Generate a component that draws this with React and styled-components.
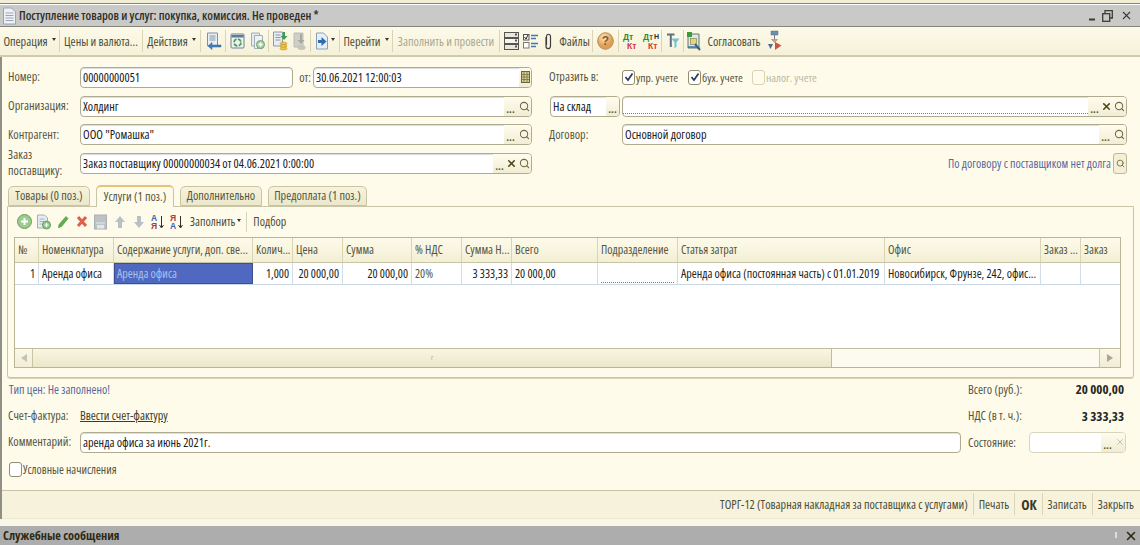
import React from "react";
import styled, { createGlobalStyle } from "styled-components";
import { Search, X } from "lucide-react";

const Global = createGlobalStyle`
  html, body { margin: 0; padding: 0; background: #fefbeb; }
  * { box-sizing: border-box; }
  body { font: 12.2px "Open Sans", "Liberation Sans", sans-serif; font-stretch: 75%; color: #4a4a38; }
`;

const Page = styled.div`
  width: 1140px; height: 545px; overflow: hidden; display: flex; flex-direction: column;
  background: #fefbeb; position: relative;
`;
const TopStrip = styled.div`
  height: 5px; flex: none; background: linear-gradient(#f1eed6 0 3px, #85856f 3px 4px, #fff 4px);
`;
const Window = styled.div`
  flex: none; height: 521px; display: flex; flex-direction: column; border-left: 2px solid #8f8f84;
`;
const TitleBar = styled.div`
  flex: none; height: 22px; background: #c9c9c7; border-bottom: 1px solid #85857a;
  display: flex; align-items: center; padding: 0 7px 0 2px; margin-left: -2px;
`;
const TitleText = styled.div`
  margin-left: 2px; font-size: 12.2px; font-weight: 600; color: #2e2e26; flex: 1; white-space: nowrap;
`;
const WinControls = styled.div`
  display: flex; align-items: center; gap: 7px; color: #3c3c34;
`;
const Toolbar = styled.div`
  flex: none; height: 30px; display: flex; align-items: center; margin-left: -2px;
  background: linear-gradient(#fdfaea, #f5f1d8); border-bottom: 2px solid #cfcbac;
`;
const Sep = styled.div`
  flex: none; width: 1px; height: ${p => p.$h || 22}px; background: #d8d4b4;
`;
const ToolBtn = styled.div`
  flex: none; width: ${p => p.$w}px; display: flex; align-items: center; justify-content: center; gap: 2px;
  white-space: nowrap; font-size: 12.2px; color: ${p => p.$off ? "#a9a894" : "#4c4c38"};
`;
const Caret = styled.span`
  width: 0; height: 0; border-left: 2.5px solid transparent; border-right: 2.5px solid transparent;
  border-top: 3px solid #38382c; margin-top: -3px; margin-left: 2px;
`;

const Form = styled.div`
  flex: none; display: grid; grid-template-columns: 72px 452px 90px 505px;
  grid-auto-rows: 28.7px; padding: 6px 0 0 6px; align-items: center;
`;
const LeftField = styled.div` display: flex; align-items: center; grid-column: 2; `;
const Label = styled.div`
  font-size: 12.2px; color: #55553f; line-height: 16px; white-space: nowrap;
`;
const RightCell = styled.div`
  grid-column: ${p => p.$col || 4}; display: flex; align-items: center;
  justify-content: ${p => p.$end ? "flex-end" : "flex-start"}; margin-left: ${p => p.$ml || 0}px;
`;
const Field = styled.div`
  height: 21px; display: flex; align-items: stretch; background: #fff; border: 1px solid #aeab8e; border-radius: 4px;
  box-shadow: inset 0 1px 1px #ddd; overflow: hidden; position: relative;
  ${p => p.$w ? `width: ${p.$w}px; flex: none;` : "flex: 1;"}
  ${p => p.$dim && "border-color: #d8d5bc; box-shadow: none;"}
`;
const Value = styled.div`
  flex: 1; padding-left: 2px; font-size: 12.2px; color: #202018; line-height: 19px; white-space: nowrap;
  ${p => p.$req && "margin: 0 0 2px 0; border-bottom: 1px dotted #d0566a;"}
`;
const FBtn = styled.div`
  flex: none; width: ${p => p.$w || 11}px; display: flex; align-items: center; justify-content: center;
  background: linear-gradient(#fefcee, #f1edd4); color: ${p => p.$dim ? "#b5b5a0" : "#5e5a32"};
  font-weight: 700; font-size: 11px;
`;
const Dots = styled(FBtn)` align-items: flex-end; line-height: 14px; width: 13px; `;
const Ot = styled.span` margin: 0 2px 0 6px; font-size: 12.2px; color: #55553f; `;
const Check = styled.div`
  width: 13px; height: 15px; border: 1px solid ${p => p.$off ? "#d6d3ba" : "#8f8d72"}; border-radius: 3px; background: ${p => p.$off ? "transparent" : "#fff"};
  display: flex; align-items: center; justify-content: center; flex: none; margin-right: 1px;
`;
const CheckLabel = styled.label`
  display: flex; align-items: center; font-size: 11.6px; color: ${p => p.$off ? "#b9b8a2" : "#55553f"};
  width: ${p => p.$w}px; flex: none; white-space: nowrap;
`;
const Blue = styled.span` color: #5768a0; font-size: 12px; white-space: nowrap; `;
const SmallBtn = styled.div`
  width: 14px; height: 21px; margin-left: 2px; border: 1px solid #bdb994; border-radius: 3px; background: #f4efd6;
  display: flex; align-items: center; justify-content: center; color: #5e5a32;
`;

const Tabs = styled.div`
  flex: none; display: flex; align-items: flex-end; gap: 6px; height: 22px; margin-top: 6px; padding-left: 6px;
`;
const Tab = styled.div`
  width: ${p => p.$w}px; height: ${p => p.$on ? 22 : 20}px; display: flex; align-items: center; justify-content: center;
  font-size: 12.2px; color: #55553f; white-space: nowrap; border: 1px solid #c9c5a4; border-radius: 5px 5px 0 0;
  background: ${p => p.$on ? "#fefbeb" : "linear-gradient(#f7f3dc,#ece8cc)"};
  ${p => p.$on && "border-top: 2px solid #e3c478; border-bottom: 0; margin-bottom: -1px; position: relative; z-index: 1;"}
`;
const Panel = styled.div`
  flex: none; height: 172px; margin: 0 6px 0 5px; border: 1px solid #c9c5a4; border-radius: 0 0 3px 3px; box-shadow: 0 1px 0 #d8d4b4;
  padding: 0 12px 0 6px; display: flex; flex-direction: column;
`;
const SubBar = styled.div`
  flex: none; height: 30px; display: flex; align-items: center; padding-left: 1px;
`;
const Slot = styled.div`
  flex: none; width: ${p => p.$w || 19}px; display: flex; align-items: center; justify-content: center;
`;
const SubText = styled.div`
  font-size: 12px; color: #4c4c38; display: flex; align-items: center; white-space: nowrap; padding: 0 ${p => p.$pr || 4}px 0 ${p => p.$pl || 4}px;
`;

const TableFrame = styled.div`
  flex: none; width: 1107px; height: 131px; border: 1px solid #b8b598; display: flex; flex-direction: column; background: #fff;
`;
const columns = "24px 75px 139px 40px 50px 69px 50px 50px 86px 80px 207px 156px 40px 1fr";
const HeadRow = styled.div`
  flex: none; height: 25px; display: grid; grid-template-columns: ${columns};
  background: linear-gradient(#fdfaea, #f3efd5); border-bottom: 1px solid #c9c5a4;
`;
const HeadCell = styled.div`
  padding: 0 3px; line-height: 23px; font-size: 12px; color: #55553f; white-space: nowrap; overflow: hidden;
  border-right: 1px solid #d8d4b4; &:last-child { border-right: 0; }
`;
const DataRow = styled.div`
  flex: none; height: 22px; display: grid; grid-template-columns: ${columns}; border-bottom: 1px solid #c8d6e6;
`;
const Cell = styled.div`
  padding: 0 3px; line-height: 21px; font-size: 12px; color: #222218; white-space: nowrap; overflow: hidden;
  text-align: ${p => p.$right ? "right" : "left"}; border-right: 1px solid #d3dde9;
  &:last-child { border-right: 0; }
  ${p => p.$sel && "background: #4f68c0; color: #a9c1ee; border: 1px solid #3d4e90; line-height: 19px; padding-left: 2px;"}
  ${p => p.$muted && "color: #55553f;"}
`;
const ReqCell = styled.div`
  border-right: 1px solid #d3dde9; padding: 0 3px;
  &::after { content: ""; display: block; height: 19px; border-bottom: 1px dotted #d0566a; }
`;
const Spacer = styled.div` flex: 1; `;
const Scroll = styled.div`
  flex: none; height: 19px; display: flex; border-top: 1px solid #c0bd9f; background: #fdfbf0;
`;
const ScrollBtn = styled.div`
  flex: none; width: ${p => p.$w}px; display: flex; align-items: center; justify-content: center;
  background: linear-gradient(#fbf8e8, #f1edd6); border-${p => p.$side}: 1px solid #c9c5a4;
`;
const Thumb = styled.div`
  flex: none; width: 799px; background: linear-gradient(#f9f6e2, #ebe7cb); border-right: 1px solid #c0bd9f;
  display: flex; align-items: center; justify-content: center; font-size: 7px; color: #b0ad90;
`;
const Track = styled.div` flex: 1; `;
const Arrow = styled.span`
  width: 0; height: 0; border-top: 4px solid transparent; border-bottom: 4px solid transparent;
  ${p => p.$left ? "border-right: 6px solid #c4c4b4;" : "border-left: 6px solid #a8a898;"}
`;

const Bottom = styled.div`
  flex: none; display: grid; grid-template-columns: 72px 881px 68px 97px; grid-auto-rows: 26.7px;
  padding: 0 0 0 6px; align-items: center; height: 114px; margin-top: -2px;
`;
const SpanLabel = styled.div` grid-column: 1 / span 2; padding-left: 1px; `;
const RightLabel = styled.div`
  grid-column: 3; margin-left: 7px; font-size: 12.2px; color: #55553f; white-space: nowrap;
`;
const Total = styled.div`
  grid-column: 4; text-align: right; padding-right: 2px; font-weight: 700; font-size: 13px; color: #26261c; white-space: nowrap;
`;
const DocLink = styled.a`
  font-size: 12.2px; color: #3c3c28; text-decoration: underline;
`;
const CommentWrap = styled.div` grid-column: 2; display: flex; `;
const FooterBar = styled.div`
  flex: none; height: 29px; display: flex; align-items: center; justify-content: flex-end; padding-right: 1px;
  background: #f6f2dc; border-top: 1px solid #c5c2a6; border-bottom: 1px solid #efebd3;
`;
const FootBtn = styled.div`
  font-size: 12.2px; padding: 0 ${p => p.$pr ?? 5}px 0 ${p => p.$pl ?? 5}px; color: #4c4c38; white-space: nowrap;
  ${p => p.$bold && "font-weight: 700; font-size: 14px; color: #38382a;"}
`;
const Gap = styled.div` flex: none; height: 8px; background: #faf7e6; margin-left: -2px; `;
const Messages = styled.div`
  flex: 1; background: #adadad; display: flex; align-items: center; justify-content: space-between; padding: 0 2px 0 3px;
  font-size: 12.3px; font-weight: 700; color: #2e2a14; height: 19px;
`;
const MsgControls = styled.div` display: flex; align-items: center; gap: 5px; color: #2e2a14; `;
const CheckboxRow = styled.div`
  grid-column: 1 / span 2; display: flex; align-items: center; padding-left: 1px; font-size: 11.8px; color: #55553f;
`;

/* ---------- drawings ---------- */
const Svg = ({ w = 16, h = 16, children }) => <svg width={w} height={h} viewBox={`0 0 ${w} ${h}`}>{children}</svg>;

const DocIcon = () => <Svg w={15} h={18}>
  <path d="M1.500 1h8l4 4v12h-12z" fill="#eef2f7" stroke="#9aa6b4" />
  <path d="M3.500 6h8M3.500 8.500h8M3.500 11h8M3.500 13.500h8" stroke="#9aa6b4" />
</Svg>;
const ReturnDoc = () => <Svg w={17} h={19}>
  <path d="M2.500 1h10v13h-10z" fill="#e9eef3" stroke="#7b91a8" />
  <path d="M4.500 4h6M4.500 6h6M4.500 8h6" stroke="#7e98b2" />
  <path d="M16 13H7v-2.500L3 14l4 3.500V15h9z" fill="#3f7fbe" stroke="#2f6298" strokeWidth=".5" />
</Svg>;
const RecycleIcon = () => <Svg w={15} h={16}>
  <rect x="1" y="1" width="13" height="14" rx="1" fill="#eef2f2" stroke="#6d8295" />
  <path d="M1.500 2h12v2.500h-12z" fill="#5d7c9a" />
  <circle cx="7.500" cy="9.500" r="3.500" fill="none" stroke="#4b9a52" strokeWidth="1.800" strokeDasharray="4 1.500" />
</Svg>;
const CopyAdd = () => <Svg w={16} h={19}>
  <path d="M1.500 1h8v13h-8z" fill="#e6ebef" stroke="#a3adb7" />
  <path d="M4.500 3.500h8v13h-8z" fill="#eef2f4" stroke="#a3adb7" />
  <circle cx="10.500" cy="12.500" r="4" fill="#a9d2a5" stroke="#6ca36a" />
  <path d="M10.500 10.500v4M8.500 12.500h4" stroke="#fff" strokeWidth="1.300" />
</Svg>;
const CoinDoc = () => <Svg w={16} h={20}>
  <path d="M1.500 1h9v14h-9z" fill="#e8edf1" stroke="#8a99a8" />
  <path d="M3.500 4h5M3.500 6.500h5M3.500 9h5" stroke="#8a99a8" />
  <path d="M11 1v4H8.500l3.500 4 3.500-4H13V1z" fill="#3e9d4b" />
  <ellipse cx="11.500" cy="12.500" rx="3.500" ry="1.500" fill="#eec54a" stroke="#b58b20" strokeWidth=".5" />
  <ellipse cx="11.500" cy="15" rx="3.500" ry="1.500" fill="#eec54a" stroke="#b58b20" strokeWidth=".5" />
  <ellipse cx="11.500" cy="17.500" rx="3.500" ry="1.500" fill="#eec54a" stroke="#b58b20" strokeWidth=".5" />
</Svg>;
const GrayDoc = () => <Svg w={14} h={19}>
  <path d="M1 1h9v14H1z" fill="#cfcfc8" stroke="#bcbcb2" />
  <path d="M7 2v6H4.500l3.500 4 3.500-4H9V2z" fill="#a8a8a0" />
  <ellipse cx="8.500" cy="15.500" rx="4" ry="2.500" fill="#c5c5bc" />
</Svg>;
const GoDoc = () => <Svg w={14} h={18}>
  <path d="M1.500 1h7l4 4v12h-11z" fill="#e8eef5" stroke="#8aa0b8" />
  <path d="M3 8h3.500V5l5 4.500-5 4.500v-3H3z" fill="#2f6cb0" />
</Svg>;
const Rows = () => <Svg w={15} h={18}>
  {[1, 7, 13].map(y => <g key={y}>
    <rect x=".5" y={y - .5} width="14" height="5" fill={y === 7 ? "#f6f6ee" : "#e8e8e0"} stroke="#56564e" />
    <rect x="11" y={y + .5} width="2" height="2" fill="#56564e" />
  </g>)}
</Svg>;
const Checks = () => <Svg w={15} h={16}>
  <rect x=".5" y="1.500" width="5.500" height="5.500" fill="#fff" stroke="#55554d" />
  <path d="M1.500 4l1.500 2 2-4" fill="none" stroke="#222" />
  <rect x=".5" y="9.500" width="5.500" height="5.500" fill="#fff" stroke="#7a7a72" />
  <path d="M8 2.500h7M8 5.500h5M8 10.500h7M8 13.500h5" stroke="#3d78b8" strokeWidth="1.500" />
</Svg>;
const Clip = () => <Svg w={8} h={17}>
  <path d="M2 4v9c0 3.500 4.500 3.500 4.500 0V3.500C6.500 .5 2.500 .5 2.500 3.500v8.500" fill="none" stroke="#3c3c3c" strokeWidth="1.200" />
</Svg>;
const Help = () => <Svg w={17} h={18}>
  <defs><radialGradient id="hg" cx=".4" cy=".3"><stop offset="0" stopColor="#fbe6c4" /><stop offset="1" stopColor="#dd9f55" /></radialGradient></defs>
  <ellipse cx="8.500" cy="9" rx="7.800" ry="8.300" fill="url(#hg)" stroke="#c08a4a" />
  <text x="8.500" y="13" fontSize="12" fontWeight="700" fill="#8a5a22" textAnchor="middle" fontFamily="Liberation Sans">?</text>
</Svg>;
const DtKt = ({ n }) => <Svg w={17} h={19}>
  <text x={n ? 1 : 2} y="8" fontSize="8.500" fontWeight="700" fill="#2c8a34" fontFamily="Liberation Sans">Дт</text>
  {n && <text x="12" y="7" fontSize="7" fontWeight="700" fill="#2a2a2a" fontFamily="Liberation Sans">Н</text>}
  <text x="6" y="17" fontSize="8.500" fontWeight="700" fill="#d8343c" fontFamily="Liberation Sans">Кт</text>
</Svg>;
const TFunnel = () => <Svg w={14} h={18}>
  <path d="M1 1.500h7.500v2H5.800V15H3.800V3.500H1z" fill="#607080" />
  <path d="M5.500 6.500h8l-3 4v4l-2 2v-6z" fill="#70c4dc" />
</Svg>;
const Approve = () => <Svg w={17} h={21}>
  <path d="M2 3h11v14H2z" fill="#dfe9dd" stroke="#5a7a6a" />
  <rect x="1" y="1" width="5" height="5" fill="#3c9c3c" />
  <rect x="4.500" y="7.500" width="6" height="6" fill="#e8d27c" stroke="#7a7a50" strokeWidth=".6" />
  <path d="M9 13l5 6" stroke="#2f5f90" strokeWidth="2" />
  <path d="M2 16h9" stroke="#3a70a8" strokeWidth="1.500" />
</Svg>;
const Route = () => <Svg w={15} h={22}>
  <path d="M4 1h7v4H4z" fill="#6f8fb2" stroke="#4f6c8e" strokeWidth=".5" />
  <path d="M7.500 5v4" stroke="#7a7a7a" />
  <path d="M4.500 9.500h6l-3 3z" fill="#c6a98a" stroke="#907050" strokeWidth=".5" />
  <path d="M1 14h5l-2.500 5z" fill="#4f6c8e" />
  <path d="M8 12l6.500 3.500L8 20z" fill="#d8503c" />
</Svg>;
const PlusGreen = () => <Svg w={15} h={15}>
  <circle cx="7.500" cy="7.500" r="7" fill="#9ccb90" stroke="#6c9c64" />
  <path d="M7.500 4v7M4 7.500h7" stroke="#fff" strokeWidth="2" />
</Svg>;
const DocPlus = () => <Svg w={15} h={16}>
  <path d="M1.500 1h7l3 3v10h-10z" fill="#e6edf2" stroke="#a3adb7" />
  <path d="M3.500 5h5M3.500 7.500h5M3.500 10h3" stroke="#a3b3c2" />
  <circle cx="10.500" cy="11" r="4" fill="#8fc688" stroke="#64a05c" />
  <path d="M10.500 9v4M8.500 11h4" stroke="#fff" strokeWidth="1.200" />
</Svg>;
const Pencil = () => <Svg w={12} h={14}>
  <path d="M9 1.500l2 2-6.500 8-3 1.200.6-3.200z" fill="#62b04a" stroke="#3f8a32" strokeWidth=".6" />
</Svg>;
const RedX = () => <Svg w={12} h={13}>
  <path d="M2 2l8 9M10 2l-8 9" stroke="#e0604c" strokeWidth="3" />
</Svg>;
const SaveGray = () => <Svg w={13} h={16}>
  <rect x=".5" y="1" width="12" height="14" fill="#bcc2c6" stroke="#aab0b4" />
  <path d="M2 9h9" stroke="#e6e8ea" />
  <rect x="3" y="11" width="7" height="3.500" fill="#e4e6e8" />
</Svg>;
const ArrowGray = ({ down }) => <Svg w={12} h={14}>
  <path d={down ? "M4 1h4v6h3l-5 6-5-6h3z" : "M4 13h4V7h3L6 1 1 7h3z"} fill="#b7c0c4" />
</Svg>;
const Sort = ({ rev }) => <Svg w={13} h={17}>
  <text x="0" y="7.500" fontSize="8.500" fontWeight="700" fill={rev ? "#a83c3c" : "#3c62a8"} fontFamily="Liberation Sans">{rev ? "Я" : "А"}</text>
  <text x="0" y="16" fontSize="8.500" fontWeight="700" fill={rev ? "#3c62a8" : "#a83c3c"} fontFamily="Liberation Sans">{rev ? "А" : "Я"}</text>
  <path d="M10.500 3v11M8.500 12l2 3 2-3" fill="none" stroke="#30302c" />
</Svg>;
const Tick = () => <Svg w={10} h={10}>
  <path d="M1.500 5l2.500 3 4.500-6.500" fill="none" stroke="#2a3a5a" strokeWidth="1.700" />
</Svg>;
const Restore = () => <Svg w={11} h={12}>
  <path d="M3 3V.7h7.300v7.300H8" fill="none" stroke="#3c3c34" strokeWidth="1.300" />
  <rect x=".7" y="3.700" width="7" height="7.600" fill="none" stroke="#3c3c34" strokeWidth="1.300" />
</Svg>;

const Magnifier = ({ s = 11 }) => <Search size={s} strokeWidth={2.2} color="#6a6640" />;
const DotsBtn = () => <Dots>...</Dots>;
const ClearBtn = () => <FBtn><X size={11} strokeWidth={3.400} color="#4e4416" /></FBtn>;
const SearchBtn = () => <FBtn $w={14}><Magnifier /></FBtn>;

const head = ["№", "Номенклатура", "Содержание услуги, доп. све...", "Колич...", "Цена", "Сумма", "% НДС", "Сумма Н...", "Всего", "Подразделение", "Статья затрат", "Офис", "Заказ ...", "Заказ"];

export default function App() {
  return (
    <Page>
      <Global />
      <TopStrip />
      <Window>
        <TitleBar>
          <DocIcon />
          <TitleText>Поступление товаров и услуг: покупка, комиссия. Не проведен *</TitleText>
          <WinControls>
            <Svg w={6} h={10}><path d="M0 8.500h6" stroke="#3c3c34" strokeWidth="2" /></Svg>
            <Restore />
            <X size={13} strokeWidth={2} color="#3c3c34" />
          </WinControls>
        </TitleBar>
        <Toolbar>
          <ToolBtn $w={59}>Операция<Caret /></ToolBtn><Sep />
          <ToolBtn $w={82}>Цены и валюта...</ToolBtn><Sep />
          <ToolBtn $w={57}>Действия<Caret /></ToolBtn><Sep />
          <Slot $w={24}><ReturnDoc /></Slot><Sep />
          <Slot $w={22}><RecycleIcon /></Slot><Slot $w={20}><CopyAdd /></Slot><Sep />
          <Slot $w={21}><CoinDoc /></Slot><Slot $w={20}><GrayDoc /></Slot><Sep />
          <Slot $w={28}><GoDoc /><Caret /></Slot><Sep />
          <ToolBtn $w={52}>Перейти<Caret /></ToolBtn><Sep />
          <ToolBtn $w={106} $off>Заполнить и провести</ToolBtn><Sep />
          <Slot $w={22}><Rows /></Slot><Slot $w={17}><Checks /></Slot><Slot $w={18}><Clip /></Slot>
          <ToolBtn $w={35}>Файлы</ToolBtn><Sep />
          <Slot $w={25}><Help /></Slot><Sep />
          <Slot $w={20}><DtKt /></Slot><Slot $w={22}><DtKt n /></Slot><Sep />
          <Slot $w={21}><TFunnel /></Slot><Sep />
          <Slot $w={21}><Approve /></Slot>
          <ToolBtn $w={58}>Согласовать</ToolBtn>
          <Slot $w={22}><Route /></Slot>
        </Toolbar>

        <Form>
          <Label>Номер:</Label>
          <LeftField>
            <Field><Value>00000000051</Value></Field>
            <Ot>от:</Ot>
            <Field $w={219}><Value>30.06.2021 12:00:03</Value>
              <FBtn $w={12}><Svg w={9} h={12}><rect x=".5" y=".5" width="8" height="11" fill="#d9cf8c" stroke="#6a6640" /><path d="M1 3.500h7M1 6h7M1 8.500h7M3 1v10M6 1v10" stroke="#6a6640" strokeWidth=".7" /></Svg></FBtn>
            </Field>
          </LeftField>
          <RightCell $col={3} $ml={17}><Label>Отразить в:</Label></RightCell>
          <RightCell>
            <CheckLabel $w={66}><Check><Tick /></Check>упр. учете</CheckLabel>
            <CheckLabel $w={64}><Check><Tick /></Check>бух. учете</CheckLabel>
            <CheckLabel $w={80} $off><Check $off />налог. учете</CheckLabel>
          </RightCell>

          <Label>Организация:</Label>
          <LeftField><Field><Value>Холдинг</Value><DotsBtn /><SearchBtn /></Field></LeftField>
          <RightCell $col={3} $ml={18}>
            <Field $w={70}><Value>На склад</Value><DotsBtn /></Field>
          </RightCell>
          <RightCell><Field><Value $req /><DotsBtn /><ClearBtn /><SearchBtn /></Field></RightCell>

          <Label>Контрагент:</Label>
          <LeftField><Field><Value>ООО "Ромашка"</Value><DotsBtn /><SearchBtn /></Field></LeftField>
          <RightCell $col={3} $ml={17}><Label>Договор:</Label></RightCell>
          <RightCell><Field><Value>Основной договор</Value><DotsBtn /><SearchBtn /></Field></RightCell>

          <Label>Заказ<br />поставщику:</Label>
          <LeftField><Field><Value>Заказ поставщику 00000000034 от 04.06.2021 0:00:00</Value><DotsBtn /><ClearBtn /><SearchBtn /></Field></LeftField>
          <RightCell $col="3 / span 2" $end>
            <Blue>По договору с поставщиком нет долга</Blue>
            <SmallBtn><Magnifier s={9} /></SmallBtn>
          </RightCell>
        </Form>

        <Tabs>
          <Tab $w={82}>Товары (0 поз.)</Tab>
          <Tab $w={78} $on>Услуги (1 поз.)</Tab>
          <Tab $w={82}>Дополнительно</Tab>
          <Tab $w={99}>Предоплата (1 поз.)</Tab>
        </Tabs>
        <Panel>
          <SubBar>
            <Slot><PlusGreen /></Slot><Slot><DocPlus /></Slot><Slot><Pencil /></Slot><Slot><RedX /></Slot>
            <Slot><SaveGray /></Slot><Slot><ArrowGray /></Slot><Slot><ArrowGray down /></Slot>
            <Slot><Sort /></Slot><Slot><Sort rev /></Slot>
            <SubText $pl={4} $pr={5}>Заполнить<Caret /></SubText><Sep $h={20} />
            <SubText $pl={6}>Подбор</SubText>
          </SubBar>
          <TableFrame>
            <HeadRow>{head.map(h => <HeadCell key={h}>{h}</HeadCell>)}</HeadRow>
            <DataRow>
              <Cell $right>1</Cell>
              <Cell>Аренда офиса</Cell>
              <Cell $sel>Аренда офиса</Cell>
              <Cell $right>1,000</Cell>
              <Cell $right>20 000,00</Cell>
              <Cell $right>20 000,00</Cell>
              <Cell $muted>20%</Cell>
              <Cell $right>3 333,33</Cell>
              <Cell>20 000,00</Cell>
              <ReqCell />
              <Cell>Аренда офиса (постоянная часть) с 01.01.2019</Cell>
              <Cell>Новосибирск, Фрунзе, 242, офис...</Cell>
              <Cell />
              <Cell />
            </DataRow>
            <Spacer />
            <Scroll>
              <ScrollBtn $w={18} $side="right"><Arrow $left /></ScrollBtn>
              <Thumb>r</Thumb>
              <Track />
              <ScrollBtn $w={21} $side="left"><Arrow /></ScrollBtn>
            </Scroll>
          </TableFrame>
        </Panel>

        <Bottom>
          <SpanLabel><Blue>Тип цен: Не заполнено!</Blue></SpanLabel>
          <RightLabel>Всего (руб.):</RightLabel>
          <Total>20 000,00</Total>

          <Label>Счет-фактура:</Label>
          <div><DocLink>Ввести счет-фактуру</DocLink></div>
          <RightLabel>НДС (в т. ч.):</RightLabel>
          <Total>3 333,33</Total>

          <Label>Комментарий:</Label>
          <CommentWrap><Field><Value>аренда офиса за июнь 2021г.</Value></Field></CommentWrap>
          <RightLabel>Состояние:</RightLabel>
          <Field $dim><Value /><Dots>...</Dots><FBtn $dim><X size={10} strokeWidth={1.800} color="#b0b09c" /></FBtn></Field>

          <CheckboxRow><Check />Условные начисления</CheckboxRow>
        </Bottom>

        <FooterBar>
          <FootBtn>ТОРГ-12 (Товарная накладная за поставщика с услугами)</FootBtn><Sep />
          <FootBtn>Печать</FootBtn><Sep />
          <FootBtn $bold $pl={6} $pr={5}>ОК</FootBtn><Sep />
          <FootBtn>Записать</FootBtn><Sep />
          <FootBtn>Закрыть</FootBtn>
        </FooterBar>
        <Gap />
      </Window>
      <Messages>
        <span>Служебные сообщения</span>
        <MsgControls>
          <Svg w={6} h={10}><path d="M3 1v6" stroke="#ddd" strokeWidth="2" /></Svg>
          <X size={14} strokeWidth={2.600} color="#2e2a14" />
        </MsgControls>
      </Messages>
    </Page>
  );
}
